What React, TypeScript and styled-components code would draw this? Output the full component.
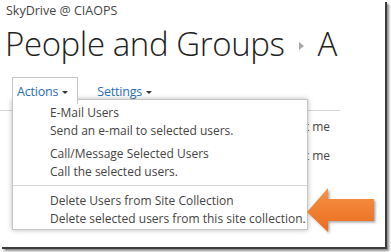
import React from "react";
import styled, { createGlobalStyle } from "styled-components";

const Global = createGlobalStyle`
  html, body { margin: 0; padding: 0; background: #ffffff; }
  body { font-family: "Open Sans", "Noto Sans", Arial, sans-serif; }
  #root { width: 391px; height: 252px; overflow: hidden; }
`;

const Frame = styled.div`
  position: relative;
  width: 385px;
  height: 247px;
  background: #ffffff;
  box-shadow: 2px 2px 0 0 #3c3c3c, 4px 4px 2px 0 rgba(0, 0, 0, 0.45);
  overflow: hidden;
`;

const SiteTitle = styled.div`
  padding: 4px 0 0 6px;
  font-size: 12.5px;
  line-height: 14px;
  color: #444444;
`;

const PageTitle = styled.div`
  display: flex;
  align-items: center;
  gap: 14px;
  padding: 6px 0 0 5px;
  height: 40px;
  font-size: 33px;
  font-weight: 300;
  line-height: 40px;
  color: #222222;
  letter-spacing: -0.4px;
`;

const Crumb = styled.span`
  width: 0;
  height: 0;
  border-top: 4px solid transparent;
  border-bottom: 4px solid transparent;
  border-left: 5px solid #a8a8a8;
  margin-top: 4px;
`;

const Tabs = styled.div`
  display: flex;
  align-items: stretch;
  gap: 14px;
  margin: 13px 0 0 12px;
  height: 27px;
`;

const Tab = styled.div<{ $open?: boolean }>`
  display: flex;
  align-items: center;
  gap: 4px;
  padding: 0 9px 0 4px;
  font-size: 12.5px;
  letter-spacing: -0.2px;
  color: #2a6eb4;
  border: 1px solid ${(p) => (p.$open ? "#c6c6c6" : "transparent")};
  border-bottom: none;
  background: #ffffff;
  position: relative;
  z-index: ${(p) => (p.$open ? 3 : 1)};
`;

const Caret = styled.span`
  width: 0;
  height: 0;
  border-left: 3px solid transparent;
  border-right: 3px solid transparent;
  border-top: 3px solid #333333;
  margin-top: 2px;
`;

const ListArea = styled.div`
  width: 340px;
  margin-top: 6px;
  border-top: 1px solid #d6d6d6;
`;

const ListRow = styled.div`
  height: 29px;
  display: flex;
  align-items: center;
  justify-content: flex-end;
  padding-right: 10px;
  font-size: 12px;
  color: #444444;
  &:first-child {
    margin-top: 1px;
  }
`;

const Menu = styled.div`
  position: absolute;
  left: 12px;
  top: 99px;
  width: 294px;
  border: 1px solid #c6c6c6;
  background: #ffffff;
  box-shadow: 0 0 5px rgba(0, 0, 0, 0.28);
  padding: 4px 0 1px;
  z-index: 2;
  display: flex;
  flex-direction: column;
`;

const Item = styled.div<{ $gap?: number }>`
  padding-left: 37px;
  margin-top: ${(p) => p.$gap ?? 0}px;
  font-size: 12px;
  line-height: 18px;
  color: #444444;
`;

const Line = styled.div`
  white-space: nowrap;
`;

const Separator = styled.div`
  height: 1px;
  background: #d4d4d4;
  margin: 4px 0 6px;
`;

const ArrowWrap = styled.svg`
  position: absolute;
  left: 303px;
  top: 185px;
  z-index: 4;
`;

function Arrow() {
  return (
    <ArrowWrap width="78" height="52" viewBox="0 0 78 52">
      <defs>
        <linearGradient id="org" x1="0" y1="0" x2="0" y2="1">
          <stop offset="0" stopColor="#f79246" />
          <stop offset="1" stopColor="#ea6c1e" />
        </linearGradient>
        <filter id="sh" x="-10%" y="-10%" width="130%" height="140%">
          <feDropShadow dx="1.5" dy="1.5" stdDeviation="1.2" floodColor="#000" floodOpacity="0.35" />
        </filter>
      </defs>
      <polygon
        points="4,27 25,3 25,14 71,14 71,36 25,36 25,47"
        fill="url(#org)"
        filter="url(#sh)"
      />
    </ArrowWrap>
  );
}

export default function App() {
  return (
    <>
      <Global />
      <Frame>
        <SiteTitle>SkyDrive @ CIAOPS</SiteTitle>
        <PageTitle>
          <span>People and Groups</span>
          <Crumb />
          <span>A</span>
        </PageTitle>
        <Tabs>
          <Tab $open>
            Actions <Caret />
          </Tab>
          <Tab>
            Settings <Caret />
          </Tab>
        </Tabs>
        <ListArea>
          <ListRow>Alert me</ListRow>
          <ListRow>Alert me</ListRow>
        </ListArea>
        <Menu>
          <Item>
            <Line>E-Mail Users</Line>
            <Line>Send an e-mail to selected users.</Line>
          </Item>
          <Item $gap={5}>
            <Line>Call/Message Selected Users</Line>
            <Line>Call the selected users.</Line>
          </Item>
          <Separator />
          <Item>
            <Line>Delete Users from Site Collection</Line>
            <Line>Delete selected users from this site collection.</Line>
          </Item>
        </Menu>
        <Arrow />
      </Frame>
    </>
  );
}
